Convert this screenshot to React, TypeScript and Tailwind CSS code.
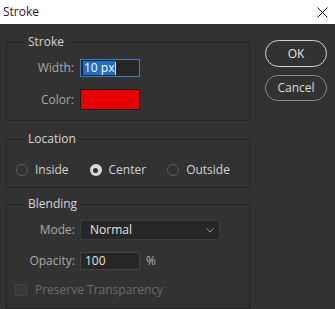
import React from "react";

const Radio: React.FC<{ label: string; checked?: boolean }> = ({ label, checked }) => (
  <label className="flex items-center gap-[7px] h-[16px]">
    {checked ? (
      <span className="w-[12px] h-[12px] rounded-full bg-[#d9d9d9] flex items-center justify-center">
        <span className="w-[5px] h-[5px] rounded-full bg-[#323232]" />
      </span>
    ) : (
      <span className="w-[12px] h-[12px] rounded-full border border-[#5e5e5e]" />
    )}
    <span className="text-[#d2d2d2]">{label}</span>
  </label>
);

const Group: React.FC<{ title: string; className?: string; children: React.ReactNode }> = ({
  title,
  className,
  children,
}) => (
  <fieldset className={`border border-[#242424] ${className ?? ""}`}>
    <legend className="ml-[18px] px-[3px] leading-[16px] text-[#d6d6d6]">{title}</legend>
    {children}
  </fieldset>
);

export default function App() {
  return (
    <div className="w-[335px] h-[309px] flex flex-col font-['Open_Sans',sans-serif] text-[12px] overflow-hidden">
      {/* title bar */}
      <div className="h-[26px] bg-white flex items-center justify-between pl-[3px] pr-[7px] text-[#222]">
        <span className="leading-none">Stroke</span>
        <svg width="11" height="11" viewBox="0 0 11 11" className="mt-[1px]">
          <path d="M0.5 0.5 L10.5 10.5 M10.5 0.5 L0.5 10.5" stroke="#111" strokeWidth="1" />
        </svg>
      </div>

      <div className="flex-1 bg-[#323232] flex pl-[6px] pt-[10px] gap-[15px]">
        <div className="w-[244px] flex flex-col">
          <Group title="Stroke" className="pt-[9px] pb-[10px]">
            <div className="grid grid-cols-[67px_auto] gap-x-[6px] gap-y-[12px] items-center">
              <span className="text-right text-[#a9a9a9]">Width:</span>
              <div className="w-[60px] h-[18px] border border-[#3f7cc4] bg-[#262626] flex items-center pl-[2px]">
                <span className="bg-[#1a6fcc] text-white leading-[14px] px-[1px]">10 px</span>
                <span className="w-px h-[13px] bg-[#e0e0e0]" />
              </div>
              <span className="text-right text-[#a9a9a9]">Color:</span>
              <div className="w-[60px] h-[21px] border border-[#1e1e1e] bg-[#e60000]" />
            </div>
          </Group>

          <Group title="Location" className="mt-[10px] pt-[15px] pb-[9px]">
            <div className="flex items-center gap-[21px] pl-[9px]">
              <Radio label="Inside" />
              <Radio label="Center" checked />
              <Radio label="Outside" />
            </div>
          </Group>

          <Group title="Blending" className="mt-[8px] pt-[8px] pb-[10px]">
            <div className="grid grid-cols-[68px_auto] gap-x-[5px] gap-y-[12px] items-center">
              <span className="text-right text-[#a9a9a9]">Mode:</span>
              <div className="w-[140px] h-[20px] rounded-[3px] border border-[#3b3b3b] bg-[#262626] flex items-center justify-between pl-[9px] pr-[5px]">
                <span className="text-[#e2e2e2]">Normal</span>
                <svg width="8" height="5" viewBox="0 0 8 5">
                  <path d="M0.5 0.5 L4 4 L7.5 0.5" stroke="#9a9a9a" strokeWidth="1" fill="none" />
                </svg>
              </div>
              <span className="text-right text-[#a9a9a9]">Opacity:</span>
              <div className="flex items-center gap-[6px]">
                <div className="w-[60px] h-[18px] border border-[#444] bg-[#262626] flex items-center pl-[4px] text-[#e2e2e2]">
                  100
                </div>
                <span className="text-[#b5b5b5]">%</span>
              </div>
            </div>
            <label className="flex items-center gap-[8px] h-[16px] mt-[12px] pl-[8px]">
              <span className="w-[12px] h-[12px] rounded-[2px] border border-[#444] bg-[#393939]" />
              <span className="text-[#6c6c6c]">Preserve Transparency</span>
            </label>
          </Group>
        </div>

        <div className="flex flex-col gap-[8px] mt-[6px]">
          <button className="w-[62px] h-[27px] rounded-full border border-[#d4d4d4] text-[#e4e4e4]">OK</button>
          <button className="w-[62px] h-[26px] rounded-full border border-[#8a8a8a] text-[#dcdcdc]">Cancel</button>
        </div>
      </div>
    </div>
  );
}
